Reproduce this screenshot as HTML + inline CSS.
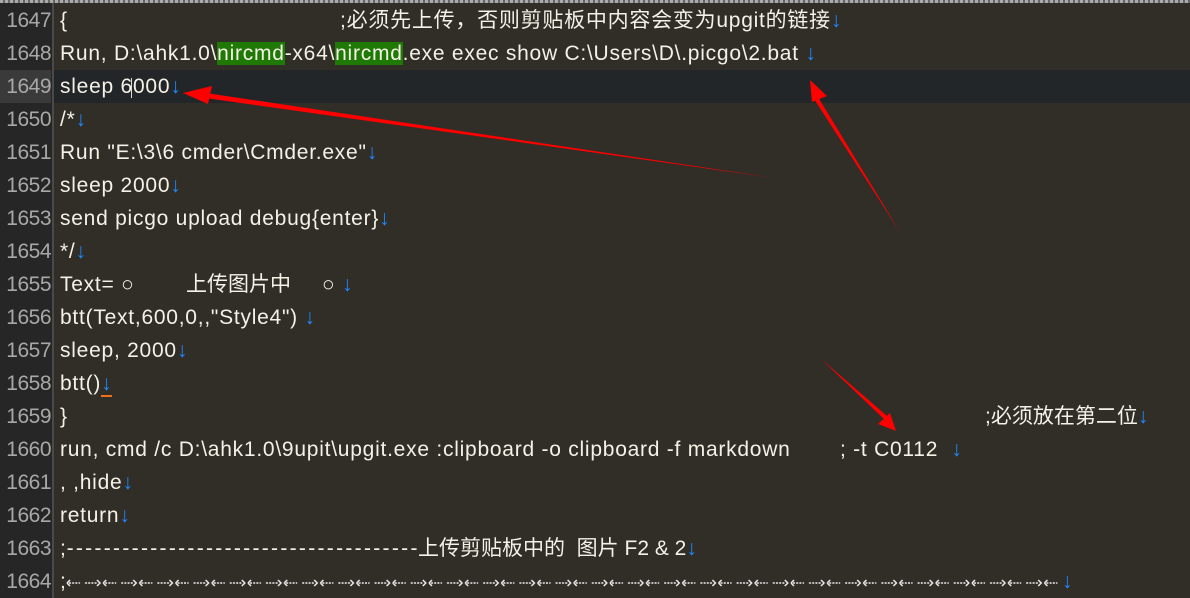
<!DOCTYPE html><html><head><meta charset="utf-8"><style>
body{margin:0;width:1190px;height:598px;overflow:hidden;background:#312d27;position:relative;font-family:"Segoe UI","Liberation Sans","Noto Sans CJK SC",sans-serif;font-size:21px;letter-spacing:0.75px;color:#f4f1e6}
.top{position:absolute;left:0;top:0;width:1190px;height:3px;background:repeating-linear-gradient(90deg,#aaa 0 3px,#666 3px 5px)}
.gut{position:absolute;left:0;top:3px;width:52px;height:595px;background:#262626;border-right:2px solid #4a4a4a}
.ln{position:absolute;left:0;width:51px;height:33px;line-height:33px;text-align:right;color:#a8a8a8;font-size:21px;letter-spacing:-0.5px}
.cur{position:absolute;left:54px;top:70px;width:1136px;height:33px;background:#232628}
.l{position:absolute;left:60px;height:33px;line-height:33px;white-space:pre}
.a{color:#1e88ff;letter-spacing:0}
.g{background:#1f7a05}
</style></head><body>
<div class="top"></div>
<div class="gut"></div>
<div class="cur"></div>
<div class="ln" style="top:4px">1647</div>
<div class="ln" style="top:37px">1648</div>
<div class="ln" style="top:70px;background:#3a3a3a">1649</div>
<div class="ln" style="top:103px">1650</div>
<div class="ln" style="top:136px">1651</div>
<div class="ln" style="top:169px">1652</div>
<div class="ln" style="top:202px">1653</div>
<div class="ln" style="top:235px">1654</div>
<div class="ln" style="top:268px">1655</div>
<div class="ln" style="top:301px">1656</div>
<div class="ln" style="top:334px">1657</div>
<div class="ln" style="top:367px">1658</div>
<div class="ln" style="top:400px">1659</div>
<div class="ln" style="top:433px">1660</div>
<div class="ln" style="top:466px">1661</div>
<div class="ln" style="top:499px">1662</div>
<div class="ln" style="top:532px">1663</div>
<div class="ln" style="top:565px">1664</div>

<div class="l" style="top:4px">{</div>
<div class="l" style="top:4px;left:340px">;必须先上传，否则剪贴板中内容会变为upgit的链接<span class="a">↓</span></div>
<div class="l" style="top:37px">Run, D:\ahk1.0\<span class="g">nircmd</span>-x64\<span class="g">nircmd</span>.exe exec show C:\Users\D\.picgo\2.bat <span class="a">↓</span></div>
<div class="l" style="top:70px">sleep 6000<span class="a">↓</span></div>
<div style="position:absolute;left:131px;top:78px;width:1px;height:20px;background:#ddd"></div>
<div class="l" style="top:103px">/*<span class="a">↓</span></div>
<div class="l" style="top:136px">Run "E:\3\6 cmder\Cmder.exe"<span class="a">↓</span></div>
<div class="l" style="top:169px">sleep 2000<span class="a">↓</span></div>
<div class="l" style="top:202px">send picgo upload debug{enter}<span class="a">↓</span></div>
<div class="l" style="top:235px">*/<span class="a">↓</span></div>
<div class="l" style="top:268px">Text= ○</div>
<div class="l" style="top:268px;left:186px;letter-spacing:0">上传图片中</div>
<div class="l" style="top:268px;left:322px">○ <span class="a">↓</span></div>
<div class="l" style="top:301px">btt(Text,600,0,,"Style4") <span class="a">↓</span></div>
<div class="l" style="top:334px">sleep, 2000<span class="a">↓</span></div>
<div class="l" style="top:367px">btt()<span class="a" style="border-bottom:2px solid #f07020">↓</span></div>
<div class="l" style="top:400px">}</div>
<div class="l" style="top:400px;left:985px;letter-spacing:0">;必须放在第二位<span class="a">↓</span></div>
<div class="l" style="top:433px">run, cmd /c D:\ahk1.0\9upit\upgit.exe :clipboard -o clipboard -f markdown</div>
<div class="l" style="top:433px;left:840px">; -t C0112  <span class="a">↓</span></div>
<div class="l" style="top:466px">, ,hide<span class="a">↓</span></div>
<div class="l" style="top:499px">return<span class="a">↓</span></div>
<div class="l" style="top:532px">;<span style="letter-spacing:2.3px">--------------------------------------</span></div>
<div class="l" style="top:532px;left:418px;letter-spacing:0">上传剪贴板中的  图片 F2 &amp; 2<span class="a">↓</span></div>
<div class="l" style="top:565px">;</div>
<div class="l a" style="top:565px;left:1062px">↓</div>

<svg style="position:absolute;left:0;top:0" width="1190" height="598">
<defs><pattern id="tb" x="66" y="578" width="36.2" height="10" patternUnits="userSpaceOnUse">
<g stroke="#eee" stroke-width="1.5" fill="none">
<path d="M1 5 L4 2 M1 5 L4 8"/>
<path d="M3 5 H14" stroke-dasharray="2 1.2"/>
<path d="M19 5 H31" stroke-dasharray="2 1.2"/>
<path d="M31 2 L34 5 L31 8"/>
</g></pattern></defs>
<rect x="66" y="578" width="996" height="10" fill="url(#tb)"/>
<g fill="#f00" stroke="none">
<polygon points="775,178 205,98 206,93"/>
<polygon points="183,93 212,86 208,104"/>
<polygon points="900,232 818,97 814,99"/>
<polygon points="810,80 827,96 812,102"/>
<polygon points="820,358 884,419 887,416"/>
<polygon points="896,431 878,424 890,413"/>
</g></svg>
</body></html>
